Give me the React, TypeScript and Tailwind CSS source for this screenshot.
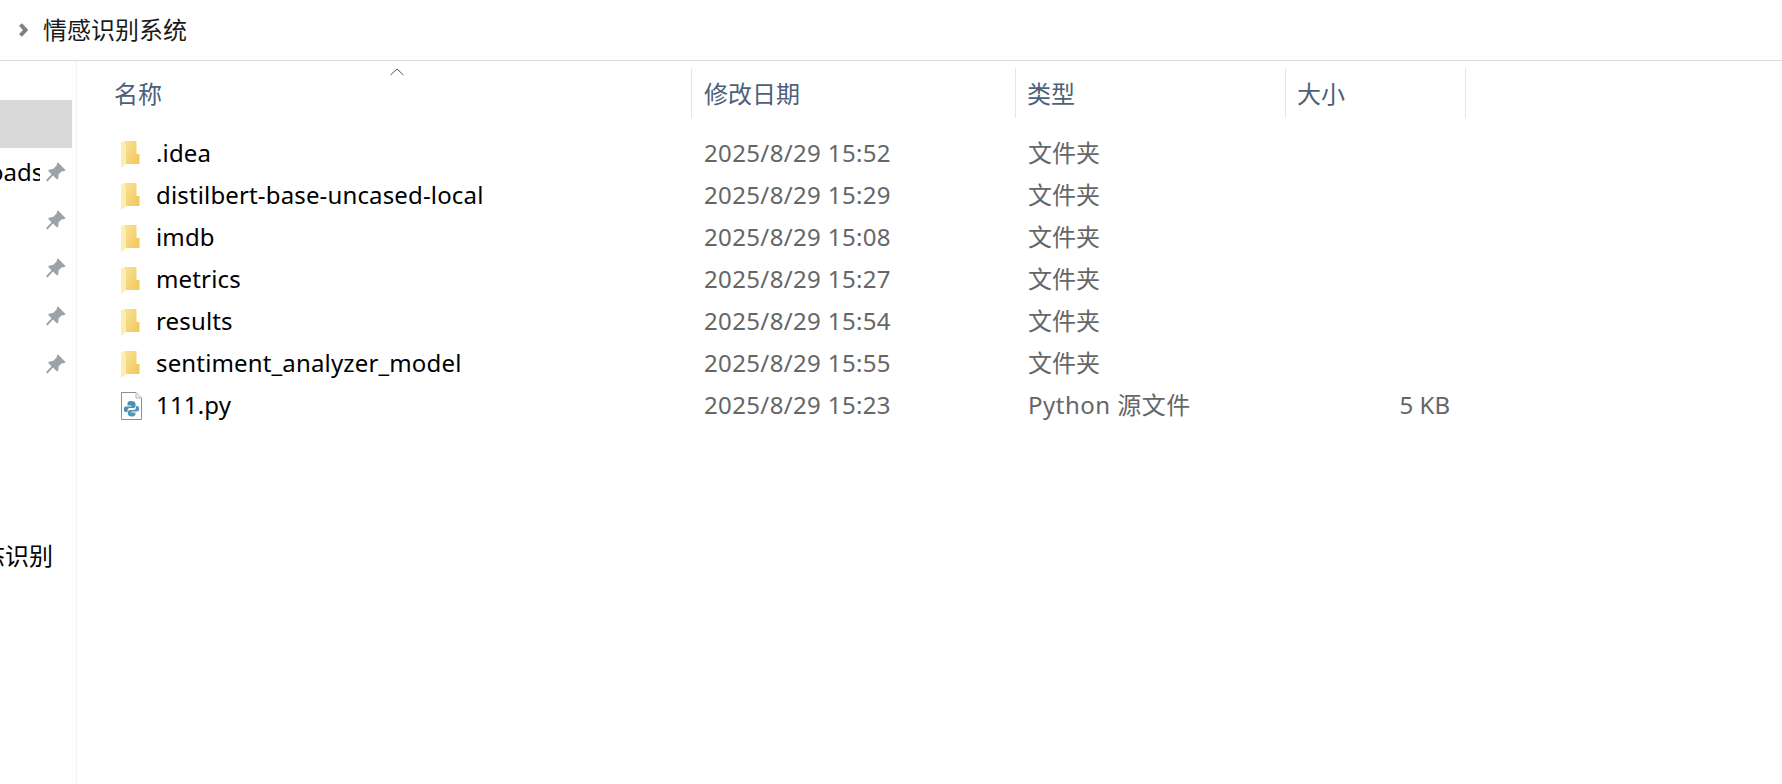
const FONT = "font-['Noto_Sans','Noto_Sans_CJK_SC',sans-serif]"

const rows = [
  { name: ".idea", date: "2025/8/29 15:52", type: "文件夹", size: "" },
  { name: "distilbert-base-uncased-local", date: "2025/8/29 15:29", type: "文件夹", size: "" },
  { name: "imdb", date: "2025/8/29 15:08", type: "文件夹", size: "" },
  { name: "metrics", date: "2025/8/29 15:27", type: "文件夹", size: "" },
  { name: "results", date: "2025/8/29 15:54", type: "文件夹", size: "" },
  { name: "sentiment_analyzer_model", date: "2025/8/29 15:55", type: "文件夹", size: "" },
  { name: "111.py", date: "2025/8/29 15:23", type: "Python 源文件", size: "5 KB" },
]

function FolderIcon() {
  return (
    <svg width="19" height="28" viewBox="0 0 19 28" className="block">
      <defs>
        <linearGradient id="folderBack" x1="0" y1="0" x2="1" y2="0.8">
          <stop offset="0" stopColor="#f9e39c" />
          <stop offset="1" stopColor="#f3c95c" />
        </linearGradient>
      </defs>
      <path d="M3 1 H15.5 V14 H18.5 V24 H3 Z" fill="url(#folderBack)" />
      <path d="M0 1 L5 4 V24 L1 27.5 H0 Z" fill="#fdeeb0" />
    </svg>
  )
}

function PythonFileIcon() {
  return (
    <svg width="21" height="28" viewBox="0 0 21 28" className="block">
      <path d="M0.5 0.5 H15 L20.5 6 V27.5 H0.5 Z" fill="#ffffff" stroke="#8f8f8f" />
      <path d="M15 0.5 V6 H20.5" fill="#f0f0f0" stroke="#b5b5b5" />
      <path d="M10 9 C7 9 6.5 10.5 6.5 12 V13.5 H10.5 V14.5 H5 C3.5 14.5 2.8 15.8 2.8 17.2 C2.8 19 3.6 20 5 20 H6.5 V18.5 C6.5 17 7.5 16 9 16 H12.5 C13.5 16 14.5 15 14.5 14 V12 C14.5 10 13 9 10 9 Z" fill="#4a8fb2" />
      <path d="M11 24.5 C14 24.5 14.5 23 14.5 21.5 V20.5 H10.5 V19.5 H16 C17.5 19.5 18.2 18.3 18.2 17 C18.2 15 17.5 14 16 14 H15 V15.5 C15 17 14 18 12.5 18 H9 C8 18 6.8 19 6.8 20 V21.5 C6.8 23.5 8 24.5 11 24.5 Z" fill="#5597b8" />
    </svg>
  )
}

function Pin() {
  return (
    <svg width="20" height="20" viewBox="0 0 20 20" className="shrink-0">
      <path
        d="M12 0.5 L19.5 8 L18 9.5 L16 9 L12.5 12.5 L12.5 16 L11 17.5 L7 13.5 L1.5 19.5 L0 18 L5.5 12.5 L2 8.5 L3.5 7.5 L7 7 L11 3 L10.5 2 Z"
        fill="#98a3ab"
      />
    </svg>
  )
}

export default function App() {
  return (
    <div className={`w-[1782px] h-[784px] bg-white overflow-hidden flex flex-col text-[24px] ${FONT}`}>
      {/* Breadcrumb */}
      <div className="h-[61px] shrink-0 border-b border-[#dcdcdc] flex items-center pl-[18px] gap-[15px]">
        <svg width="10" height="14" viewBox="0 0 10 14">
          <path d="M2.5 1.5 L7.5 7 L2.5 12.5" fill="none" stroke="#7f7f7f" strokeWidth="4" />
        </svg>
        <span className="text-[#1a1a1a] leading-none">情感识别系统</span>
      </div>

      <div className="flex-1 flex min-h-0">
        {/* Sidebar, cut off on the left */}
        <div className="w-[77px] shrink-0 border-r border-[#f2f2f2] pt-[39px] pr-[4px] flex flex-col">
          <div className="h-[48px] bg-[#d9d9d9]" />
          <div className="h-[48px] flex items-center justify-between pr-[6px]">
            <div className="w-[40px] overflow-hidden">
              <span className="block text-black whitespace-nowrap ml-[-11px]">oads</span>
            </div>
            <Pin />
          </div>
          {[0, 1, 2, 3].map((i) => (
            <div key={i} className="h-[48px] flex items-center justify-end pr-[6px]">
              <Pin />
            </div>
          ))}
          <div className="h-[144px]" />
          <div className="h-[48px] flex items-center overflow-hidden">
            <span className="text-black whitespace-nowrap ml-[-19px]">态识别</span>
          </div>
        </div>

        {/* File list */}
        <div className="flex-1 relative pt-[7px]">
          <svg width="14" height="8" viewBox="0 0 14 8" className="absolute left-[313px] top-[7px]">
            <path d="M0.5 7 L7 1 L13.5 7" fill="none" stroke="#555555" />
          </svg>

          <div className="flex h-[50px] items-center text-[#4c607a]">
            <div className="w-[614px] pl-[37px] pt-[2px]">名称</div>
            <div className="w-[324px] h-full flex items-center border-l border-[#e5e5e5] pl-[12px] pt-[2px]">修改日期</div>
            <div className="w-[270px] h-full flex items-center border-l border-[#e5e5e5] pl-[11px] pt-[2px]">类型</div>
            <div className="w-[181px] h-full flex items-center border-l border-[#e5e5e5] border-r pl-[11px] pt-[2px]">大小</div>
          </div>

          <div className="pt-[15px]">
            {rows.map((row) => (
              <div key={row.name} className="h-[42px] flex items-center">
                <div className="w-[615px] flex items-center pl-[44px]">
                  <div className="w-[35px] shrink-0">
                    {row.name.endsWith(".py") ? <PythonFileIcon /> : <FolderIcon />}
                  </div>
                  <span className="text-black whitespace-nowrap tracking-[0.15px] pb-[2px]">{row.name}</span>
                </div>
                <div className="w-[324px] pl-[12px] text-[#666666] whitespace-nowrap tracking-[0.36px] pb-[2px]">{row.date}</div>
                <div className={`w-[270px] pl-[12px] text-[#666666] whitespace-nowrap pb-[2px] ${row.size ? "tracking-[0.5px]" : ""}`}>{row.type}</div>
                <div className="w-[164px] text-right text-[#666666] whitespace-nowrap pb-[2px]">{row.size}</div>
              </div>
            ))}
          </div>
        </div>
      </div>
    </div>
  )
}
